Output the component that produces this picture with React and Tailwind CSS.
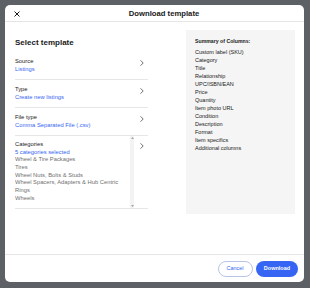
import React from "react";

const Chevron = () => (
  <svg width="4" height="6" viewBox="0 0 4 6" className="block">
    <path d="M0.8 0.6 L3.2 3 L0.8 5.4" fill="none" stroke="#4a4a4a" strokeWidth="0.8" strokeLinecap="round" strokeLinejoin="round" />
  </svg>
);

const Row = ({ label, value }) => (
  <div className="flex justify-between items-start pt-[5px] pb-[6px] border-b border-[#e6e6e6]">
    <div className="leading-[8px] text-[5.8px]">
      <div className="text-[#191919]">{label}</div>
      <div className="text-[#3665f3]">{value}</div>
    </div>
    <div className="w-[12px] h-[8px] mt-[1.5px] flex items-center justify-center">
      <Chevron />
    </div>
  </div>
);

const columns = [
  "Custom label (SKU)",
  "Category",
  "Title",
  "Relationship",
  "UPC/ISBN/EAN",
  "Price",
  "Quantity",
  "Item photo URL",
  "Condition",
  "Description",
  "Format",
  "Item specifics",
  "Additional columns",
];

const cats = [
  "Wheel & Tire Packages",
  "Tires",
  "Wheel Nuts, Bolts & Studs",
  "Wheel Spacers, Adapters & Hub Centric Rings",
  "Wheels",
];

export default function App() {
  return (
    <div className="w-[310px] h-[288px] bg-[#5d6064] pt-[5px] pl-[5px] font-['Liberation_Sans',Arial,sans-serif] overflow-hidden">
      <div className="w-[299px] h-[277px] bg-white rounded-[5px] flex flex-col overflow-hidden">
        {/* header */}
        <div className="h-[17px] flex items-center border-b border-[#e6e6e6] pl-[9px] pt-[2px]">
          <svg width="6" height="6" viewBox="0 0 6 6" className="block">
            <path d="M0.8 0.8 L5.2 5.2 M5.2 0.8 L0.8 5.2" stroke="#191919" strokeWidth="1" strokeLinecap="round" />
          </svg>
          <div className="flex-1 ml-[4px] text-center text-[7.7px] font-bold text-[#191919] leading-[10px]">
            Download template
          </div>
        </div>

        {/* body */}
        <div className="flex-1 flex pl-[10px] pr-[9px]">
          <div className="w-[133px] pt-[15px]">
            <div className="text-[8px] font-bold leading-[12px] mb-[3px] text-[#191919]">Select template</div>
            <Row label="Source" value="Listings" />
            <Row label="Type" value="Create new listings" />
            <Row label="File type" value="Comma Separated File (.csv)" />
            <div className="flex h-[73px] border-b border-[#e6e6e6]">
              <div className="w-[115px] pt-[5px] leading-[7.67px] text-[5.8px] overflow-hidden">
                <div className="text-[#191919]">Categories</div>
                <div className="text-[#3665f3]">5 categories selected</div>
                {cats.map((c) => (
                  <div key={c} className="text-[#707070] pr-[4px]">{c}</div>
                ))}
              </div>
              <div className="w-[4px] bg-[#f3f3f3] flex flex-col justify-between items-center py-[1px]">
                <svg width="3" height="2" viewBox="0 0 3 2" className="block">
                  <path d="M0 2 L1.5 0 L3 2 Z" fill="#a3a3a3" />
                </svg>
                <svg width="3" height="2" viewBox="0 0 3 2" className="block">
                  <path d="M0 0 L1.5 2 L3 0 Z" fill="#a3a3a3" />
                </svg>
              </div>
              <div className="flex-1 flex justify-end">
                <div className="w-[12px] h-[8px] mt-[6px] flex items-center justify-center">
                  <Chevron />
                </div>
              </div>
            </div>
          </div>

          <div className="ml-auto mt-[8px] w-[109px] h-[184px] bg-[#f5f5f5] pl-[9px] pt-[7px]">
            <div className="text-[5.2px] font-bold leading-[8px] mb-[3px] text-[#191919]">Summary of Columns:</div>
            {columns.map((c) => (
              <div key={c} className="text-[5.5px] leading-[8px] text-[#191919]">{c}</div>
            ))}
          </div>
        </div>

        {/* footer */}
        <div className="h-[28px] border-t border-[#e6e6e6] flex items-center justify-end pr-[6px] gap-[3.5px]">
          <div className="w-[35px] h-[16px] rounded-full border border-[#b8c4e6] flex items-center justify-center text-[5.5px] text-[#3665f3]">
            Cancel
          </div>
          <div className="w-[42px] h-[16px] rounded-full bg-[#3665f3] flex items-center justify-center text-[5.5px] font-bold text-white">
            Download
          </div>
        </div>
      </div>
    </div>
  );
}
